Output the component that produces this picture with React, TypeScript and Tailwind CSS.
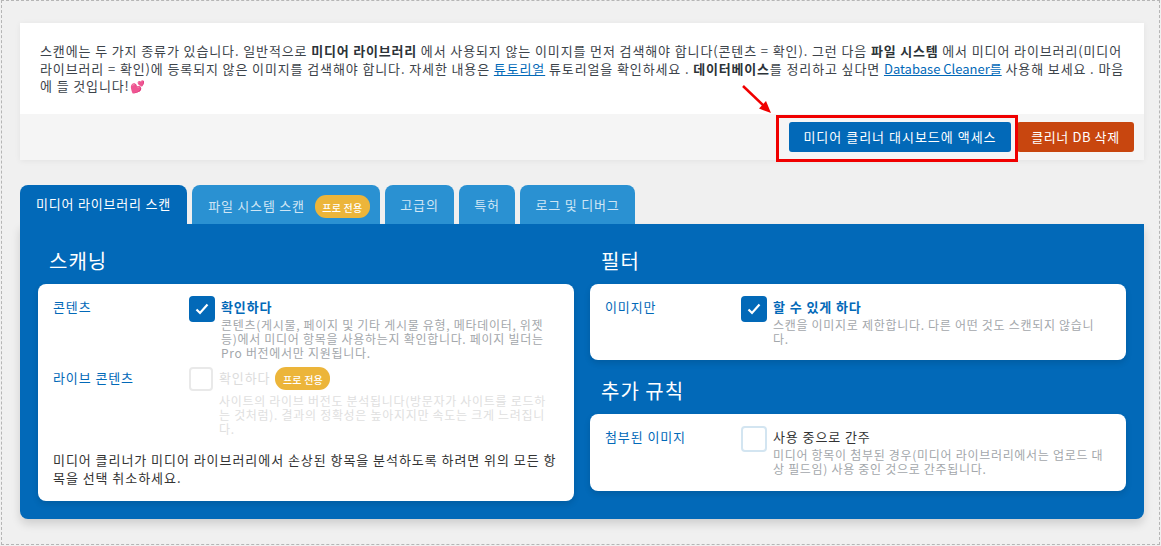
import React from 'react';

const FONT = "font-['Noto_Sans_CJK_KR','Noto_Sans',sans-serif]";

const ProBadge = () => (
  <span className="inline-flex h-[23px] w-[55px] shrink-0 items-center justify-center rounded-[11px] bg-[#ecb53a] pt-[2px] text-[10px] font-medium tracking-[0.2px] text-white">
    프로 전용
  </span>
);

const Check = ({ checked, disabled }: { checked?: boolean; disabled?: boolean }) => {
  if (checked) {
    return (
      <span className="flex h-[26px] w-[26px] shrink-0 items-center justify-center rounded-[4px] bg-[#0269b8]">
        <svg width="14" height="12" viewBox="0 0 14 12" fill="none" stroke="#fff" strokeWidth="2.2">
          <path d="M1.5 6.5 5 10l7.5-8.5" />
        </svg>
      </span>
    );
  }
  if (disabled) {
    return <span className="h-[24px] w-[24px] shrink-0 rounded-[4px] border-2 border-[#e9e9e9] bg-white" />;
  }
  return <span className="h-[26px] w-[26px] shrink-0 rounded-[4px] border-2 border-[#d3e5f1] bg-white" />;
};

interface RowProps {
  label: string;
  title: string;
  desc: string;
  checked?: boolean;
  disabled?: boolean;
  pro?: boolean;
  strong?: boolean;
}

const Row = ({ label, title, desc, checked, disabled, pro, strong }: RowProps) => (
  <div className="flex">
    <div className="w-[136px] shrink-0 pt-[1px] text-[13px] leading-[20px] tracking-[0.9px] text-[#0269b8]">{label}</div>
    <Check checked={checked} disabled={disabled} />
    <div className="min-w-0 flex-1 pl-[6px] pr-[4px]">
      <div className="flex h-[22px] items-center gap-[5px]">
        <span
          className={`text-[13px] leading-[20px] tracking-[0.9px] ${strong ? 'font-bold text-[#0269b8]' : disabled ? 'text-[#dcdcdc]' : 'text-[#333]'}`}
        >
          {title}
        </span>
        {pro && <ProBadge />}
      </div>
      <p className={`text-[12px] leading-[14px] tracking-[0.7px] ${disabled ? 'mt-[5px] text-[#e0e0e0]' : 'text-[#a3a7ab]'}`}>{desc}</p>
    </div>
  </div>
);

const Card = ({ children, className = '' }: { children: React.ReactNode; className?: string }) => (
  <div className={`rounded-[8px] bg-white px-[15px] pt-[12px] shadow-[0_3px_6px_rgba(0,0,0,0.12)] ${className}`}>{children}</div>
);

const TABS = [
  { name: '파일 시스템 스캔', w: 'w-[188px] pl-[6px] pt-[3px]', pro: true },
  { name: '고급의', w: 'w-[69px]' },
  { name: '특허', w: 'w-[56px]' },
  { name: '로그 및 디버그', w: 'w-[115px]' },
];

const HEADING = 'ml-[11px] h-[36px] text-[20px] leading-[26px] tracking-[1px] text-white';

export default function App() {
  return (
    <div className={`relative h-[546px] w-[1161px] overflow-hidden bg-[#f0f0f0] ${FONT}`}>
      <div className="absolute inset-x-[1px] bottom-[1px] top-0 border border-dashed border-[#b5b5b5]" />

      <div className="relative px-[20px] pt-[23px]">
        <div className="w-[1124px] bg-white shadow-[0_1px_6px_rgba(0,0,0,0.06)]">
          <p className="h-[91px] pl-[20px] pr-[16px] pt-[19px] text-[13px] leading-[17.6px] tracking-[0.88px] text-[#3c434a]">
            스캔에는 두 가지 종류가 있습니다. 일반적으로 <b className="tracking-[0.8px] text-[#2c3338]">미디어 라이브러리</b> 에서 사용되지 않는 이미지를 먼저 검색해야 합니다(콘텐츠 = 확인). 그런 다음 <b className="tracking-[0.8px] text-[#2c3338]">파일 시스템</b> 에서 미디어 라이브러리(미디어 라이브러리 = 확인)에 등록되지 않은 이미지를 검색해야 합니다. 자세한 내용은 <a className="text-[#0269b8] underline">튜토리얼</a> 튜토리얼을 확인하세요 . <b className="tracking-[0.8px] text-[#2c3338]">데이터베이스</b>를 정리하고 싶다면 <a className="tracking-[0px] text-[#0269b8] underline">Database Cleaner를</a> 사용해 보세요 . 마음에 들 것입니다!<span className="text-[12px] tracking-normal text-[#e8344e]">💕</span>
          </p>
          <div className="flex h-[46px] justify-end gap-[6px] bg-[#f5f5f5] pr-[10px] pt-[8px]">
            <button className="h-[30px] w-[222px] rounded-[3px] bg-[#0269b8] text-[13px] tracking-[1px] text-white">미디어 클리너 대시보드에 액세스</button>
            <button className="h-[30px] w-[117px] rounded-[3px] bg-[#c8460f] text-[13px] tracking-[0.6px] text-white">클리너 DB 삭제</button>
          </div>
        </div>

        <div className="mt-[25px] flex h-[39px] gap-[5px]">
          <div className="flex w-[167px] justify-center rounded-t-[8px] bg-[#0269b8] pt-[10px] text-[13px] leading-[18px] tracking-[0.8px] text-white">
            미디어 라이브러리 스캔
          </div>
          {TABS.map((t) => (
            <div
              key={t.name}
              className={`flex items-center justify-center gap-[10px] rounded-t-[8px] bg-[#2a91d2] text-[13px] tracking-[0.8px] text-[#cfe6f5] ${t.w}`}
            >
              <span>{t.name}</span>
              {t.pro && <ProBadge />}
            </div>
          ))}
        </div>

        <div className="grid h-[295px] w-[1124px] grid-cols-[536px_536px] gap-x-[16px] rounded-b-[8px] bg-[#0269b8] px-[18px] pt-[24px] shadow-[0_5px_10px_rgba(0,0,0,0.14)]">
          <div>
            <h2 className={HEADING}>스캐닝</h2>
            <Card className="h-[217px]">
              <Row
                label="콘텐츠"
                title="확인하다"
                strong
                checked
                desc="콘텐츠(게시물, 페이지 및 기타 게시물 유형, 메타데이터, 위젯 등)에서 미디어 항목을 사용하는지 확인합니다. 페이지 빌더는 Pro 버전에서만 지원됩니다."
              />
              <div className="mt-[7px]">
                <Row
                  label="라이브 콘텐츠"
                  title="확인하다"
                  disabled
                  pro
                  desc="사이트의 라이브 버전도 분석됩니다(방문자가 사이트를 로드하는 것처럼). 결과의 정확성은 높아지지만 속도는 크게 느려집니다."
                />
              </div>
              <p className="mt-[15px] text-[13px] leading-[18px] tracking-[0.95px] text-[#333]">
                미디어 클리너가 미디어 라이브러리에서 손상된 항목을 분석하도록 하려면 위의 모든 항목을 선택 취소하세요.
              </p>
            </Card>
          </div>
          <div>
            <h2 className={HEADING}>필터</h2>
            <Card className="h-[76px]">
              <Row label="이미지만" title="할 수 있게 하다" strong checked desc="스캔을 이미지로 제한합니다. 다른 어떤 것도 스캔되지 않습니다." />
            </Card>
            <h2 className={`${HEADING} mt-[18px]`}>추가 규칙</h2>
            <Card className="h-[77px]">
              <Row
                label="첨부된 이미지"
                title="사용 중으로 간주"
                desc="미디어 항목이 첨부된 경우(미디어 라이브러리에서는 업로드 대상 필드임) 사용 중인 것으로 간주됩니다."
              />
            </Card>
          </div>
        </div>
      </div>

      {/* callout added over the screenshot */}
      <div className="absolute left-[776px] top-[115px] h-[47px] w-[242px] border-[3px] border-[#f00000]" />
      <svg className="absolute left-[738px] top-[82px]" width="38" height="34" viewBox="0 0 38 34">
        <path d="M5 4 28 26" stroke="#f00000" strokeWidth="2.5" />
        <path d="M33 31 21 26.5 28 19z" fill="#f00000" />
      </svg>
    </div>
  );
}
